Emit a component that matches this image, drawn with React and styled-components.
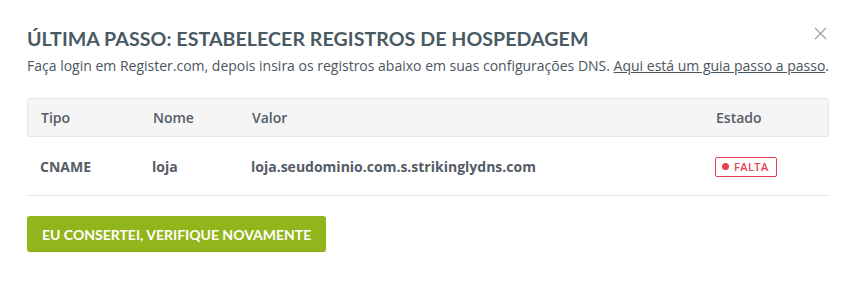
import React from "react";
import styled, { createGlobalStyle } from "styled-components";

const Global = createGlobalStyle`
  body {
    margin: 0;
    background: #fff;
    font-family: "Open Sans", "Liberation Sans", sans-serif;
  }
`;

function App() {
  return (
    <>
      <Global />
      <Modal>
        <Close aria-label="close">
          <svg width="13" height="13" viewBox="0 0 13 13">
            <path d="M1 1L12 12M12 1L1 12" stroke="#a3a3a3" strokeWidth="1.3" />
          </svg>
        </Close>
        <Title>Última passo: estabelecer registros de hospedagem</Title>
        <Lead>
          Faça login em Register.com, depois insira os registros abaixo em suas configurações DNS.{" "}
          <a href="#">Aqui está um guia passo a passo</a>.
        </Lead>
        <Table>
          <HeadRow>
            <Cell>Tipo</Cell>
            <Cell>Nome</Cell>
            <Cell>Valor</Cell>
            <Cell>Estado</Cell>
          </HeadRow>
          <Row>
            <Cell>CNAME</Cell>
            <Cell>loja</Cell>
            <Cell>loja.seudominio.com.s.strikinglydns.com</Cell>
            <Cell>
              <Badge>
                <Dot />
                FALTA
              </Badge>
            </Cell>
          </Row>
        </Table>
        <Button>Eu consertei, verifique novamente</Button>
      </Modal>
    </>
  );
}

const Modal = styled.div`
  position: relative;
  padding: 25px 24px 30px 27px;
`;

const Close = styled.button`
  position: absolute;
  top: 27px;
  right: 26px;
  border: none;
  background: none;
  padding: 0;
  cursor: pointer;
  line-height: 0;
`;

const Title = styled.h2`
  margin: 0;
  font-family: "Lato", "Open Sans", sans-serif;
  font-weight: 700;
  font-size: 19.6px;
  line-height: 28px;
  text-transform: uppercase;
  color: #4a5a63;
  letter-spacing: 0.05px;
`;

const Lead = styled.p`
  margin: 2px 0 0;
  font-size: 14px;
  line-height: 22px;
  color: #4b5560;

  a {
    color: #4b5560;
    text-decoration: underline;
  }
`;

const Table = styled.div`
  margin-top: 21px;
  width: 802px;
`;

const grid = `
  display: grid;
  grid-template-columns: 112px 99px 464px 1fr;
  align-items: center;
  padding-left: 13px;
`;

const HeadRow = styled.div`
  ${grid}
  height: 37px;
  background: #f5f5f5;
  border: 1px solid #e6e6e6;
  border-radius: 3px;
  color: #545c66;
  font-weight: 600;
  font-size: 14px;
`;

const Row = styled.div`
  ${grid}
  height: 58px;
  border-bottom: 1px solid #e4e4e4;
  color: #545c66;
  font-weight: 700;
  font-size: 14px;
`;

const Cell = styled.div`
  white-space: nowrap;
`;

const Badge = styled.span`
  display: inline-flex;
  align-items: center;
  gap: 5px;
  height: 18px;
  padding: 0 7px 0 6px;
  border: 1px solid #e5404f;
  border-radius: 2px;
  color: #e5404f;
  font-size: 11px;
  font-weight: 600;
  letter-spacing: 0.4px;
`;

const Dot = styled.span`
  width: 7px;
  height: 7px;
  border-radius: 50%;
  background: #e5404f;
`;

const Button = styled.button`
  margin-top: 20px;
  height: 36px;
  padding: 0 15px;
  border: none;
  border-radius: 3px;
  background: #93b51c;
  box-shadow: inset 0 -1px 0 rgba(0, 0, 0, 0.08);
  color: #fff;
  font-family: "Lato", "Open Sans", sans-serif;
  font-weight: 700;
  font-size: 14px;
  text-transform: uppercase;
  cursor: pointer;
`;

export default App;
